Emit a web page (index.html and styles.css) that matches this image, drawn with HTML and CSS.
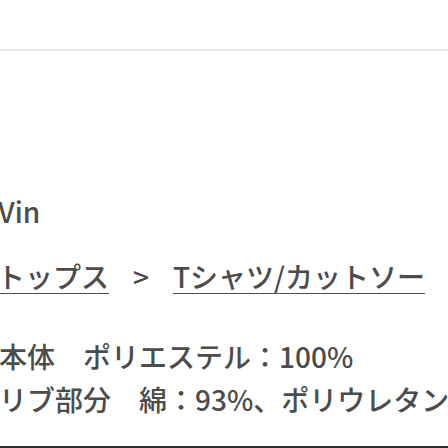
FILE: index.html
```html
<!DOCTYPE html>
<html lang="ja">
<head>
<meta charset="utf-8">
<link rel="stylesheet" href="styles.css">
</head>
<body>
<div class="page">
  <div class="topbar"></div>
  <div class="content">
    <p class="brand">Vin</p>
    <p class="crumbs"><a class="link">トップス</a><span class="sep">&gt;</span><a class="link">Tシャツ/カットソー</a></p>
    <div class="material">
      <p class="mline">本体　ポリエステル：100%</p>
      <p class="mline">リブ部分　綿：93%、ポリウレタン：7%</p>
    </div>
  </div>
  <div class="bottombar"></div>
</div>
</body>
</html>
```
FILE: styles.css
```css
html, body {
  margin: 0;
  padding: 0;
  background: #ffffff;
  overflow: hidden;
}
.page {
  width: 448px;
  height: 448px;
  display: flex;
  flex-direction: column;
  overflow: hidden;
  font-family: "Noto Sans CJK JP", "Noto Sans", sans-serif;
  font-weight: 500;
  color: #4c4c4c;
}
.topbar {
  height: 49px;
  border-bottom: 2px solid #e6e6e6;
  flex: none;
}
.content {
  flex: 1;
  margin-left: -3px;
  padding-top: 140px;
  white-space: nowrap;
}
.brand {
  margin: 0 0 0 1px;
  font-size: 28px;
  line-height: 40px;
}
.crumbs {
  margin: 25px 0 0 0;
  font-size: 28px;
  line-height: 40px;
}
.link {
  color: #4c4c4c;
  text-decoration: underline;
  text-underline-offset: 5px;
  text-decoration-thickness: 1px;
}
.sep {
  margin: 0 24px;
}
.material {
  margin-top: 39px;
  margin-left: 2px;
}
.mline {
  margin: 0;
  font-size: 28px;
  line-height: 43px;
}
.bottombar {
  height: 2px;
  background: #2a2a2a;
  flex: none;
}
```
